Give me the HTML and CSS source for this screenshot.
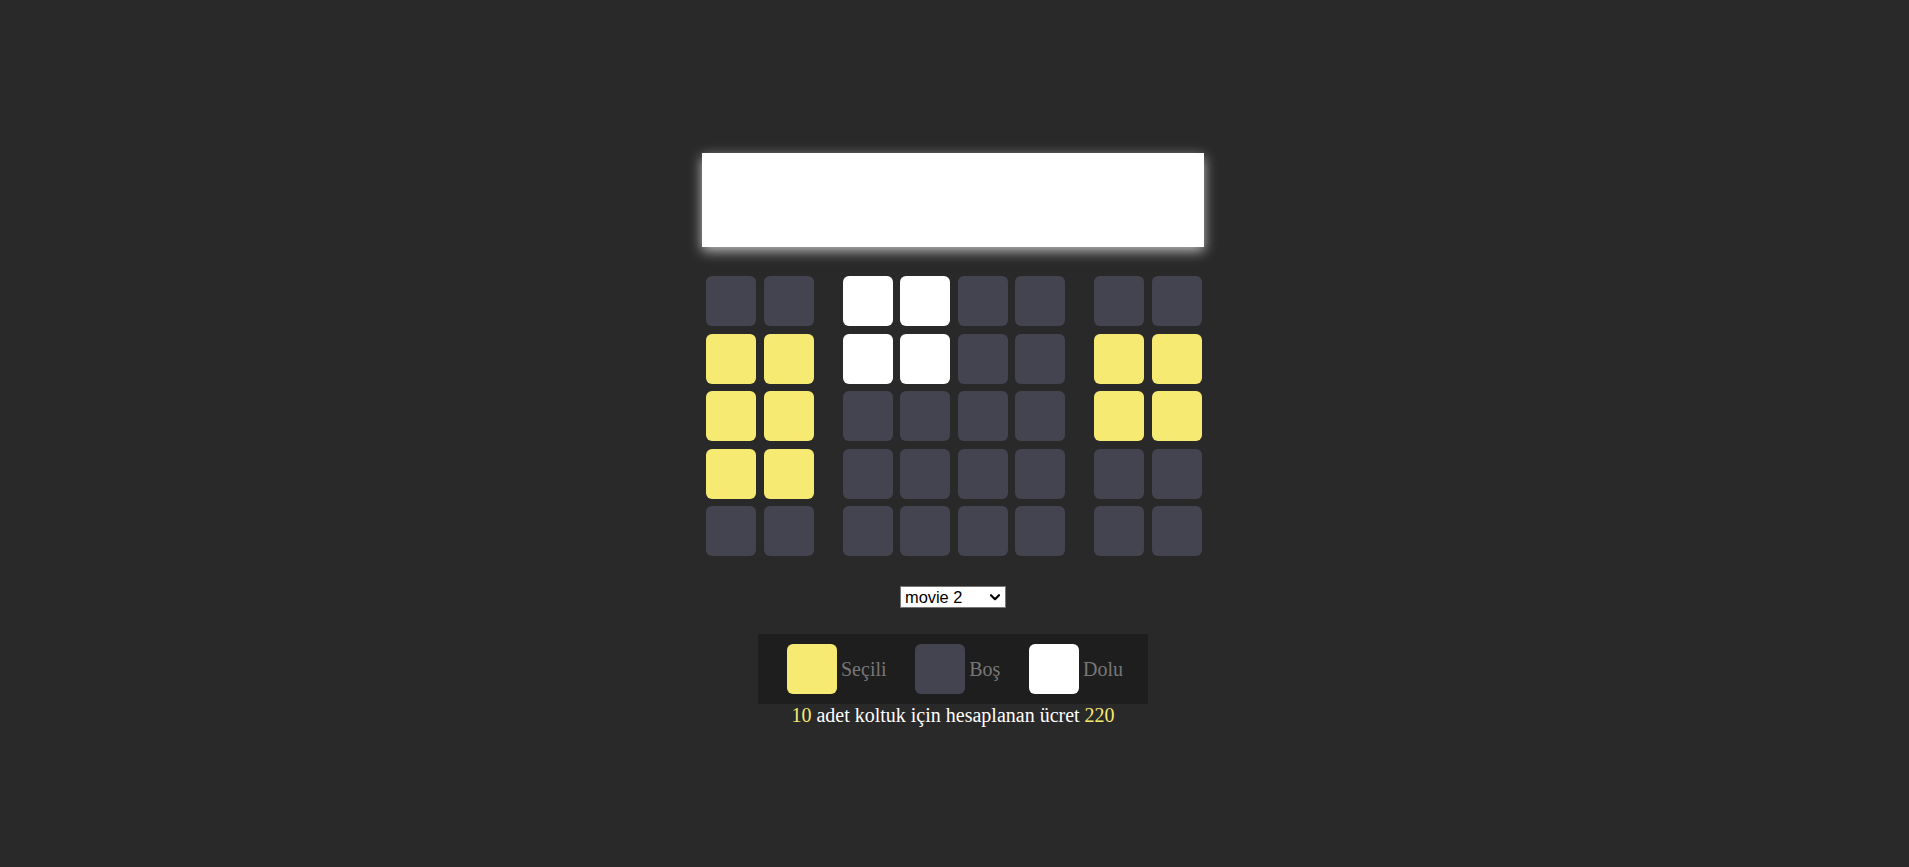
FILE: index.html
```html
<!DOCTYPE html>
<html lang="tr">
<head>
<meta charset="utf-8">
<title>Sinema</title>
<link rel="stylesheet" href="styles.css">
</head>
<body>
  <main class="page">
    <div class="theater">
      <div class="screen"></div>
      <div class="seats">
        <div class="row">
          <div class="group"><span class="seat"></span><span class="seat"></span></div>
          <div class="group"><span class="seat occupied"></span><span class="seat occupied"></span><span class="seat"></span><span class="seat"></span></div>
          <div class="group"><span class="seat"></span><span class="seat"></span></div>
        </div>
        <div class="row">
          <div class="group"><span class="seat selected"></span><span class="seat selected"></span></div>
          <div class="group"><span class="seat occupied"></span><span class="seat occupied"></span><span class="seat"></span><span class="seat"></span></div>
          <div class="group"><span class="seat selected"></span><span class="seat selected"></span></div>
        </div>
        <div class="row">
          <div class="group"><span class="seat selected"></span><span class="seat selected"></span></div>
          <div class="group"><span class="seat"></span><span class="seat"></span><span class="seat"></span><span class="seat"></span></div>
          <div class="group"><span class="seat selected"></span><span class="seat selected"></span></div>
        </div>
        <div class="row">
          <div class="group"><span class="seat selected"></span><span class="seat selected"></span></div>
          <div class="group"><span class="seat"></span><span class="seat"></span><span class="seat"></span><span class="seat"></span></div>
          <div class="group"><span class="seat"></span><span class="seat"></span></div>
        </div>
        <div class="row">
          <div class="group"><span class="seat"></span><span class="seat"></span></div>
          <div class="group"><span class="seat"></span><span class="seat"></span><span class="seat"></span><span class="seat"></span></div>
          <div class="group"><span class="seat"></span><span class="seat"></span></div>
        </div>
      </div>
    </div>

    <div class="select-wrap">
      <select class="movie-select">
        <option>movie 1</option>
        <option selected>movie 2</option>
        <option>movie 3</option>
      </select>
      <svg class="select-arrow" width="10" height="7" viewBox="0 0 10 7" aria-hidden="true">
        <path d="M1 1.2 L5 5.2 L9 1.2" fill="none" stroke="#000" stroke-width="2.2" stroke-linecap="round" stroke-linejoin="round"/>
      </svg>
    </div>

    <ul class="showcase">
      <li class="legend-item"><span class="seat selected"></span><span class="legend-label">Seçili</span></li>
      <li class="legend-item"><span class="seat"></span><span class="legend-label">Boş</span></li>
      <li class="legend-item"><span class="seat occupied"></span><span class="legend-label">Dolu</span></li>
    </ul>

    <p class="summary"><span class="highlight">10</span> adet koltuk için hesaplanan ücret <span class="highlight">220</span></p>
  </main>
</body>
</html>
```

FILE: styles.css
```css
html, body {
  margin: 0;
  padding: 0;
}

body {
  background: #292929;
  font-family: "Liberation Serif", "Times New Roman", serif;
  font-size: 20px;
  color: #ffffff;
  height: 867px;
  overflow: hidden;
}

.page {
  display: flex;
  flex-direction: column;
  align-items: center;
  padding-top: 153px;
  padding-right: 3px;
}

.theater {
  width: 502px;
  display: flex;
  flex-direction: column;
  align-items: flex-start;
}

.screen {
  width: 502px;
  height: 94px;
  background: #ffffff;
  box-shadow: 0 4px 12px rgba(255, 255, 255, 0.7);
}

.seats {
  margin-top: 29px;
  padding-left: 4px;
  display: flex;
  flex-direction: column;
  gap: 7.5px;
}

.row {
  display: flex;
  gap: 29px;
}

.group {
  display: flex;
  gap: 7.5px;
}

.seat {
  display: block;
  width: 50px;
  height: 50px;
  border-radius: 6px;
  background: #444451;
  flex: none;
}

.seat.selected {
  background: #f6ea72;
}

.seat.occupied {
  background: #ffffff;
}

.select-wrap {
  position: relative;
  margin-top: 30px;
  width: 106px;
  height: 22px;
}

.movie-select {
  display: block;
  -webkit-appearance: none;
  appearance: none;
  width: 106px;
  height: 22px;
  margin: 0;
  font-family: "Liberation Sans", Arial, sans-serif;
  font-size: 16.4px;
  line-height: 20px;
  background: #ffffff;
  color: #000000;
  border: 1px solid #767676;
  border-radius: 0;
  padding: 0 0 0 4px;
}

.select-arrow {
  position: absolute;
  left: 90px;
  top: 8px;
  pointer-events: none;
}

.showcase {
  list-style: none;
  margin: 26px 0 0;
  width: 390px;
  box-sizing: border-box;
  height: 70px;
  padding: 0 25px 0 29px;
  background: #1e1e1e;
  display: flex;
  align-items: center;
  justify-content: space-between;
  color: #777777;
}

.legend-item {
  display: flex;
  align-items: center;
}

.legend-label {
  margin-left: 4px;
  line-height: 23px;
}

.summary {
  margin: 0;
  line-height: 23px;
  text-align: center;
}

.highlight {
  color: #f6ea72;
}
```
